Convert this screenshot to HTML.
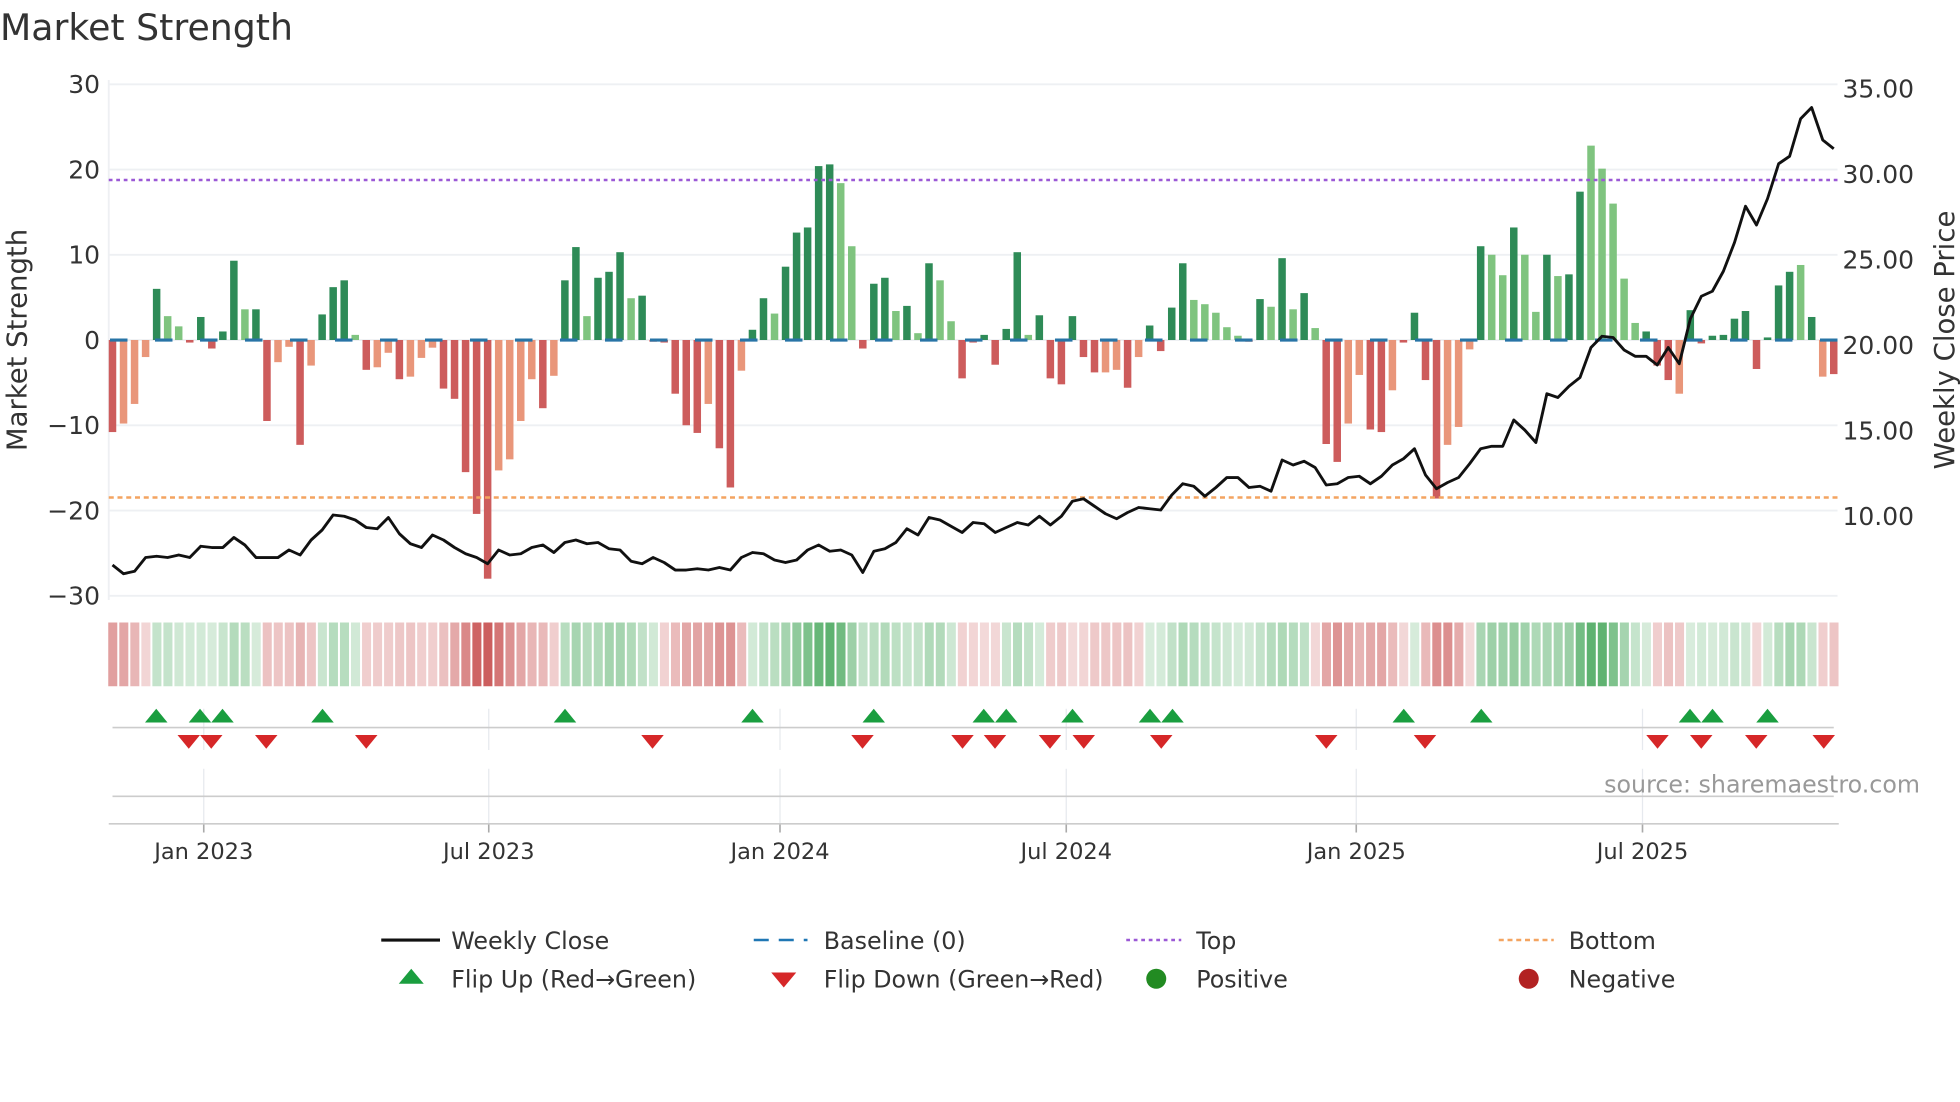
<!DOCTYPE html>
<html><head><meta charset="utf-8"><style>
html,body{margin:0;padding:0;background:#fff;width:1960px;height:1102px;overflow:hidden}
svg{display:block}
text{font-family:"DejaVu Sans","Liberation Sans",sans-serif;fill:#333}
</style></head><body>
<svg id="s" width="1960" height="1102" viewBox="0 0 1568 881.6" xmlns="http://www.w3.org/2000/svg">
<text x="0" y="32" font-size="29">Market Strength</text>
<g id="g"></g>
<text x="0" y="0" font-size="22" transform="translate(21,272) rotate(-90)" text-anchor="middle">Market Strength</text>
<text x="0" y="0" font-size="22" transform="translate(1563,272) rotate(-90)" text-anchor="middle">Weekly Close Price</text>
<text x="1536" y="634" font-size="19" fill="#999" text-anchor="end" style="fill:#999">source: sharemaestro.com</text>
<line x1="305" y1="752" x2="352" y2="752" stroke="#111" stroke-width="2.5"/>
<text x="361" y="759" font-size="19">Weekly Close</text>
<line x1="603" y1="752" x2="646" y2="752" stroke="#1f77b4" stroke-width="2" stroke-dasharray="12 8"/>
<text x="659" y="759" font-size="19">Baseline (0)</text>
<line x1="901" y1="752" x2="945" y2="752" stroke="#9b59d6" stroke-width="2" stroke-dasharray="3 3"/>
<text x="957" y="759" font-size="19">Top</text>
<line x1="1199" y1="752" x2="1243" y2="752" stroke="#f4a460" stroke-width="2" stroke-dasharray="4 3"/>
<text x="1255" y="759" font-size="19">Bottom</text>
<polygon points="319,787 339,787 329,775" fill="#1a9e3f"/>
<text x="361" y="790" font-size="19">Flip Up (Red→Green)</text>
<polygon points="617,778 637,778 627,790" fill="#d62728"/>
<text x="659" y="790" font-size="19">Flip Down (Green→Red)</text>
<circle cx="925" cy="783" r="8" fill="#228b22"/>
<text x="957" y="790" font-size="19">Positive</text>
<circle cx="1223" cy="783" r="8" fill="#b22222"/>
<text x="1255" y="790" font-size="19">Negative</text>
</svg>
<script>
var V=[-10.8,-9.8,-7.5,-2,6,2.8,1.6,-0.3,2.7,-1,1,9.3,3.6,3.6,-9.5,-2.6,-0.8,-12.3,-3,3,6.2,7,0.6,-3.5,-3.2,-1.5,-4.6,-4.3,-2.1,-0.9,-5.7,-6.9,-15.5,-20.4,-28,-15.3,-14,-9.5,-4.6,-8,-4.2,7,10.9,2.8,7.3,8,10.3,4.9,5.2,-0.2,-0.3,-6.3,-10,-10.9,-7.5,-12.7,-17.3,-3.6,1.2,4.9,3.1,8.6,12.6,13.2,20.4,20.6,18.4,11,-1,6.6,7.3,3.4,4,0.8,9,7,2.2,-4.5,-0.3,0.6,-2.9,1.3,10.3,0.6,2.9,-4.5,-5.2,2.8,-2,-3.8,-3.8,-3.5,-5.6,-2,1.7,-1.3,3.8,9,4.7,4.2,3.2,1.5,0.5,-0.2,4.8,3.9,9.6,3.6,5.5,1.4,-12.2,-14.3,-9.8,-4.1,-10.5,-10.8,-5.9,-0.3,3.2,-4.7,-18.6,-12.3,-10.2,-1.1,11,10,7.6,13.2,10,3.3,10,7.5,7.7,17.4,22.8,20.1,16,7.2,2,1,-3,-4.7,-6.3,3.5,-0.4,0.5,0.6,2.5,3.4,-3.4,0.3,6.4,8,8.8,2.7,-4.3,-4];
var L=[0,1,1,1,0,1,1,0,0,0,0,0,1,0,0,1,1,0,1,0,0,0,1,0,1,1,0,1,1,1,0,0,0,0,0,1,1,1,1,0,1,0,0,1,0,0,0,1,0,0,0,0,0,0,1,0,0,1,0,0,1,0,0,0,0,0,1,1,0,0,0,1,0,1,0,1,1,0,0,0,0,0,0,1,0,0,0,0,0,0,1,1,0,1,0,0,0,0,1,1,1,1,1,0,0,1,0,1,0,1,0,0,1,1,0,0,1,0,0,0,0,1,1,1,0,1,1,0,1,1,0,1,0,0,1,1,1,1,1,0,0,0,1,0,0,0,0,0,0,0,0,0,0,1,0,1];
var P=[452,459,457,446,445,446,444,446,437,438,438,430,436,446,446,446,440,444,432,424,412,413,416,422,423,414,427,435,438,428,432,438,443,446,451,440,444,443,438,436,442,434,432,435,434,439,440,449,451,446,450,456,456,455,456,454,456,446,442,443,448,450,448,440,436,441,440,444,458,441,439,434,423,428,414,416,421,426,418,419,426,422,418,420,413,420,413,401,399,405,411,415,410,406,407,408,396,387,389,397,390,382,382,390,389,393,368,372,369,374,388,387,382,381,387,381,372,367,359,380,391,386,382,371,359,357,357,336,344,354,315,318,309,302,278,269,270,280,285,285,292,278,291,255,237,233,217,194,165,180,159,131,125,95,86,112,119];
var n=V.length,x0=90,x1=1467,dx=(x1-x0)/(n-1);
function X(i){return x0+i*dx}
function Y(v){return 272-6.82*v}
var h='';
[30,20,10,0,-10,-20,-30].forEach(function(t){var y=Y(t);
 h+='<line x1="87" x2="1470" y1="'+y+'" y2="'+y+'" stroke="#eef0f3" stroke-width="1.5"/>';
 h+='<text x="80" y="'+(y+7)+'" font-size="20" text-anchor="end">'+(t<0?'−'+(-t):t)+'</text>';});
h+='<line x1="87" x2="87" y1="64" y2="480" stroke="#eef0f3" stroke-width="1.5"/>';
[35,30,25,20,15,10].forEach(function(p){var y=276-13.68*(p-20);
 h+='<text x="1474" y="'+(y+7)+'" font-size="20">'+p.toFixed(2)+'</text>';});
for(var i=0;i<n;i++){var v=V[i],c;
 if(v>=0)c=L[i]?'#7fc47f':'#2e8b57';else c=L[i]?'#e9967a':'#cd5c5c';
 var y=Math.min(Y(v),272),hh=Math.abs(Y(v)-272);
 h+='<rect x="'+(X(i)-3)+'" y="'+y+'" width="6" height="'+Math.max(hh,1)+'" fill="'+c+'"/>';}
h+='<line x1="88" x2="1470" y1="272" y2="272" stroke="#2874a6" stroke-width="2.5" stroke-dasharray="14 22"/>';
h+='<line x1="87" x2="1470" y1="144" y2="144" stroke="#9b59d6" stroke-width="2" stroke-dasharray="3 3"/>';
h+='<line x1="87" x2="1470" y1="398" y2="398" stroke="#f4a460" stroke-width="2" stroke-dasharray="4 3"/>';
var pts=P.map(function(y,i){return X(i).toFixed(1)+','+y}).join(' ');
h+='<polyline points="'+pts+'" fill="none" stroke="#111" stroke-width="2.3" stroke-linejoin="round"/>';
for(var i=0;i<n;i++){var a=V[Math.max(0,i-1)],b=V[i],c2=V[Math.min(n-1,i+1)];var s=(a+2*b+c2)/4;var col;
 if(s>=0){var al=0.22+0.68*Math.min(s/20,1);col='rgba(76,170,96,'+al.toFixed(2)+')';}
 else{var al=0.2+0.72*Math.min(-s/22,1);col='rgba(200,80,80,'+al.toFixed(2)+')';}
 h+='<rect x="'+(X(i)-3.4)+'" y="498" width="'+(dx-1.6)+'" height="51" fill="'+col+'"/>';}
var ticks=[[163,'Jan 2023'],[391,'Jul 2023'],[624,'Jan 2024'],[853,'Jul 2024'],[1085,'Jan 2025'],[1314,'Jul 2025']];
ticks.forEach(function(t){h+='<line x1="'+t[0]+'" x2="'+t[0]+'" y1="567" y2="600" stroke="#e6e9ee" stroke-width="1"/>';
 h+='<line x1="'+t[0]+'" x2="'+t[0]+'" y1="615" y2="659" stroke="#e6e9ee" stroke-width="1"/>';
 h+='<line x1="'+t[0]+'" x2="'+t[0]+'" y1="659" y2="666" stroke="#aaa" stroke-width="1.3"/>';
 h+='<text x="'+t[0]+'" y="687" font-size="18" text-anchor="middle">'+t[1]+'</text>';});
h+='<line x1="90" x2="1467" y1="582" y2="582" stroke="#ccc" stroke-width="1.3"/>';
h+='<line x1="90" x2="1467" y1="637" y2="637" stroke="#ccc" stroke-width="1.3"/>';
h+='<line x1="87" x2="1471" y1="659" y2="659" stroke="#ccc" stroke-width="1.3"/>';
[125,160,178,258,452,602,699,787,805,858,920,938,1123,1185,1352,1370,1414].forEach(function(x){
 h+='<polygon points="'+(x-9)+',578 '+(x+9)+',578 '+x+',567" fill="#1a9e3f"/>';});
[151,169,213,293,522,690,770,796,840,867,929,1061,1140,1326,1361,1405,1459].forEach(function(x){
 h+='<polygon points="'+(x-9)+',588 '+(x+9)+',588 '+x+',599" fill="#d62728"/>';});
document.getElementById('g').innerHTML=h;
</script>
</body></html>
